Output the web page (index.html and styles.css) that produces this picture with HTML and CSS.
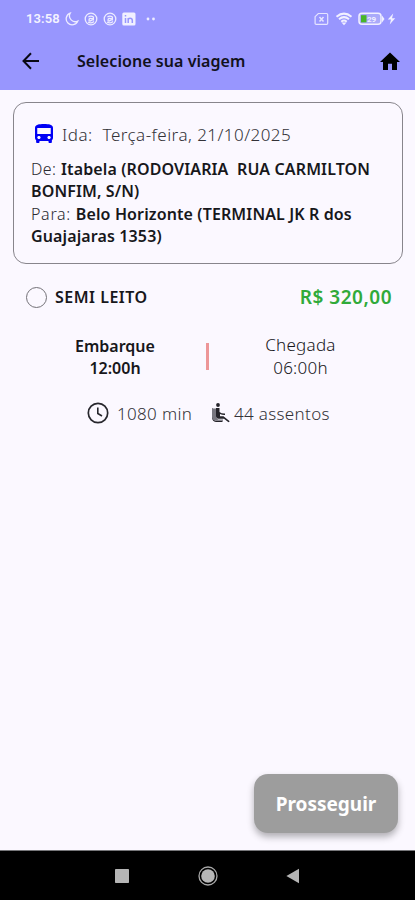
FILE: index.html
```html
<!DOCTYPE html>
<html lang="pt-BR">
<head>
<meta charset="utf-8">
<title>Selecione sua viagem</title>
<link rel="stylesheet" href="styles.css">
</head>
<body>
<div class="screen">
  <header class="top">
    <div class="status">
      <div class="status-left">
        <span class="clock">13:58</span>
        <svg class="moon" width="14" height="14" viewBox="0 0 14 14"><path d="M5.2 1.2A6 6 0 1 0 12.8 9 5.7 5.7 0 0 1 5.2 1.2Z"/></svg>
        <svg class="ring" width="14" height="14" viewBox="0 0 14 14"><circle cx="7" cy="7" r="5.8"/><path d="M4.4 5Q7 3.3 9.4 5V8.4M9.4 7Q5 5.5 5 8T9.4 7M4 10Q7 12 10 9.5"/></svg>
        <svg class="ring" width="14" height="14" viewBox="0 0 14 14"><circle cx="7" cy="7" r="5.8"/><path d="M4.4 5Q7 3.3 9.4 5V8.4M9.4 7Q5 5.5 5 8T9.4 7M4 10Q7 12 10 9.5"/></svg>
        <svg class="linked" width="14" height="14" viewBox="0 0 14 14"><rect x=".3" y=".5" width="13.2" height="13" rx="1.5" fill="#f1f0ff"/><path d="M3.5 6v5M3.5 3v1.6M6.2 11V6M6.2 8q0-1.7 1.9-1.7T10.300 8v3" fill="none" stroke="#9896fe" stroke-width="1.5"/></svg>
        <svg class="dots" width="10" height="4" viewBox="0 0 10 4"><circle cx="2" cy="2" r="1.4"/><circle cx="7.500" cy="2" r="1.4"/></svg>
      </div>
      <div class="status-right">
        <svg width="15" height="14" viewBox="0 0 15 14"><path d="M4.300 1.500H12.500Q13.700 1.500 13.700 2.700V11.200Q13.700 12.400 12.500 12.400H2.300Q1.100 12.400 1.100 11.200V4.700Z" fill="none" stroke="#e6e5ff" stroke-width="1.200"/><path d="M5.500 5l4 4.500M9.500 5l-4 4.500" stroke="#e6e5ff" stroke-width="1.500"/></svg>
        <svg class="wifi" width="18" height="14" viewBox="0 0 18 14"><path d="M1.500 4.800Q9-1.600 16.500 4.800M4 7.300Q9 3 14 7.300M6.300 9.700Q9 7.300 11.700 9.700" fill="none" stroke="#f1f0ff" stroke-width="2"/><path d="M6.500 10.400h5L9 13.300Z" fill="#f1f0ff"/></svg>
        <svg class="battery" width="27" height="14" viewBox="0 0 27 14"><rect x="1" y="1.300" width="22" height="11" rx="3" fill="#aaaafa" stroke="#f1f0ff" stroke-width="1.500"/><path d="M3 3.200H8.500V10.400H3Z" fill="#48b629"/><path d="M24 3.500L26.500 7 24 10.500Z" fill="#f1f0ff"/><text x="9" y="9.800">29</text></svg>
        <svg class="bolt" width="9" height="12" viewBox="0 0 9 12"><path d="M6.200.6.8 6.600H4L2.700 11.400 8.200 5.200H5Z" fill="#f1f0ff"/></svg>
      </div>
    </div>
    <div class="appbar">
      <svg class="back" width="18" height="18" viewBox="0 0 18 18"><path d="M17 9H1.500M9 1.300 1.500 9 9 16.700" fill="none" stroke="#090914" stroke-width="2"/></svg>
      <h1>Selecione sua viagem</h1>
      <svg class="home" width="20" height="19" viewBox="0 0 20 19"><path d="M8 18V11.700h4V18h5V10h3L10 .5 0 10h3v8Z"/></svg>
    </div>
  </header>
  <main>
    <section class="card">
      <div class="date">
        <svg width="18" height="20" viewBox="0 0 16 20" preserveAspectRatio="none"><path d="M0 14c0 .88.39 1.670 1 2.220V18c0 .55.45 1 1 1h1c.55 0 1-.45 1-1v-1h8v1c0 .55.45 1 1 1h1c.55 0 1-.45 1-1v-1.780c.61-.55 1-1.340 1-2.220V4c0-3.500-3.580-4-8-4S0 .5 0 4v10zm3.500 1c-.83 0-1.500-.67-1.500-1.500S2.670 12 3.500 12s1.500.67 1.500 1.500S4.330 15 3.500 15zm9 0c-.83 0-1.500-.67-1.500-1.500s.67-1.500 1.500-1.500 1.500.67 1.500 1.500-.67 1.500-1.500 1.500zM14 10H2V4h12v6z" fill="#0000f5"/></svg>
        <span class="ida">Ida:</span><span class="day">Terça-feira, 21/10/2025</span>
      </div>
      <p>De: <b>Itabela (RODOVIARIA&nbsp; RUA CARMILTON<br>BONFIM, S/N)</b></p>
      <p class="to">Para: <b>Belo Horizonte (TERMINAL JK R dos<br>Guajajaras 1353)</b></p>
    </section>
    <section class="option">
      <span class="radio"></span><b class="class-name">SEMI LEITO</b><b class="price">R$ 320,00</b>
    </section>
    <section class="times">
      <div class="depart"><span>Embarque</span><span class="hour">12:00h</span></div>
      <i class="bar"></i>
      <div class="arrive"><span>Chegada</span><span class="hour">06:00h</span></div>
    </section>
    <section class="facts">
      <svg class="watch" width="22" height="22" viewBox="0 0 22 22"><circle cx="11" cy="11" r="9.700" fill="none" stroke="#27272d" stroke-width="1.700"/><path d="M10.800 5.500V11.500L15 14" fill="none" stroke="#27272d" stroke-width="1.600"/></svg>
      <span class="minutes">1080 min</span>
      <svg class="seat" width="18" height="20" viewBox="0 0 18 20"><circle cx="6" cy="2" r="1.900"/><path d="M1 5.500V14Q1 17.700 4.500 17.700H10.500V19H4Q0 18.500 0 14V5.500Z"/><path d="M4 5H7.500V9Q9.500 10.700 13 10.500V12Q10.500 12.200 8 10.900V13.200H11.500L17.700 18.200 16.500 19.300 12 15.800H6.500Q4 15.800 4 13Z"/><path d="M0 5.500H4V14L6 16.500H11V17.700H4Q0 17 0 14Z" fill="#77767f"/></svg>
      <span class="seats">44 assentos</span>
    </section>
  </main>
  <footer class="action"><button>Prosseguir</button></footer>
  <nav>
    <svg width="16" height="16" viewBox="0 0 16 16"><rect x="1" y="1" width="14" height="14" rx=".7" fill="#b5b5b5"/></svg>
    <svg class="circle" width="22" height="22" viewBox="0 0 22 22"><circle cx="11" cy="11" r="9" fill="none" stroke="#a8a8a8" stroke-width="1.300"/><circle cx="11" cy="11" r="6.800" fill="#b7b7b7"/></svg>
    <svg class="triangle" width="14" height="16" viewBox="0 0 14 16"><path d="M13 .7V15.300L.4 8Z" fill="#b5b5b5"/></svg>
  </nav>
</div>
</body>
</html>
```
FILE: styles.css
```css
* { box-sizing: border-box; }
body { margin: 0; font-family: "Noto Sans", sans-serif; color: #17171b; background: #fbf8ff; }
svg { display: block; flex: none; }
p, h1 { margin: 0; }
.screen { width: 415px; height: 900px; display: flex; flex-direction: column; overflow: hidden; }
.top { height: 90px; background: #9896fe; flex: none; }
.status { height: 38px; padding: 0 18px 0 26px; display: flex; align-items: center; justify-content: space-between; }
.status-left, .status-right { display: flex; align-items: center; }
.clock { font: 600 13px/18px Roboto, sans-serif; color: #f4f3ff; width: 39px; letter-spacing: .1px; white-space: nowrap; }
.moon, .ring { fill: none; stroke: #edecff; stroke-width: 1.300; }
.ring { margin-left: 5px; }
.linked { margin-left: 5px; }
.dots { margin-left: 10px; fill: #edecff; }
.wifi { margin-left: 6px; }
.battery { margin-left: 5px; }
.battery text { font: 700 8px Roboto, sans-serif; fill: #f1f0ff; }
.bolt { margin-left: 2px; margin-right: 1px; }
.appbar { height: 46px; padding: 0 15px 0 22px; display: flex; align-items: center; }
.appbar h1 { margin-left: 37px; flex: 1; font-size: 16px; font-weight: 600; letter-spacing: .06px; color: #11111b; white-space: nowrap; }
.card { height: 162px; margin: 12px 12px 0 13px; padding: 20px 17px 0; border: 1px solid #88858c; border-radius: 13px; white-space: nowrap; }
.date { display: flex; align-items: center; height: 22px; padding-left: 4px; margin-bottom: 13px; font-size: 17px; font-weight: 300; color: #333238; letter-spacing: .46px; }
.ida { margin-left: 9px; }
.day { margin-left: 10px; }
.card p { font-size: 16px; line-height: 22.300px; font-weight: 300; color: #2b2b31; letter-spacing: .45px; }
.card .to { letter-spacing: .7px; }
b { font-weight: 600; color: #17171b; }
.card b { letter-spacing: .12px; }
.option { display: flex; align-items: center; height: 28px; margin: 19px 23px 0 26px; }
.radio { width: 21px; height: 21px; border: 1.500px solid #737177; border-radius: 50%; }
.class-name { margin-left: 8px; font-size: 16px; letter-spacing: .5px; }
.price { margin-left: auto; color: #30aa3a; font-size: 19px; letter-spacing: .5px; }
.times { display: grid; grid-template-columns: 183px 3px 183px; margin: 23px 23px 0; align-items: center; }
.times div { display: flex; flex-direction: column; align-items: center; font-size: 16px; line-height: 22px; }
.times .depart { font-weight: 600; padding-left: 1px; }
.times .arrive { font-weight: 300; font-size: 17px; line-height: 22.500px; letter-spacing: .25px; }
.bar { height: 27px; background: #ed9698; }
.facts { display: flex; align-items: center; height: 26px; margin: 21px 0 0 87px; font-size: 17px; font-weight: 300; color: #333238; letter-spacing: .33px; white-space: nowrap; }
.minutes { margin-left: 8px; width: 95px; }
.seat { fill: #242329; }
.seats { margin-left: 4px; }
.action { margin-top: auto; height: 76px; padding-right: 17px; display: flex; justify-content: flex-end; align-items: flex-start; flex: none; }
button { width: 144px; height: 59px; border: 0; border-radius: 14px; background: #9d9d9d; color: #fff; font: 700 19px "Noto Sans", sans-serif; box-shadow: 0 4px 7px rgba(0,0,0,.3); }
nav { flex: none; height: 50px; border-top: 1px solid #77777a; background: #000; display: grid; grid-template-columns: 86px 86px 86px; justify-content: center; justify-items: center; align-items: center; }
.triangle { margin-right: 2px; }
```
